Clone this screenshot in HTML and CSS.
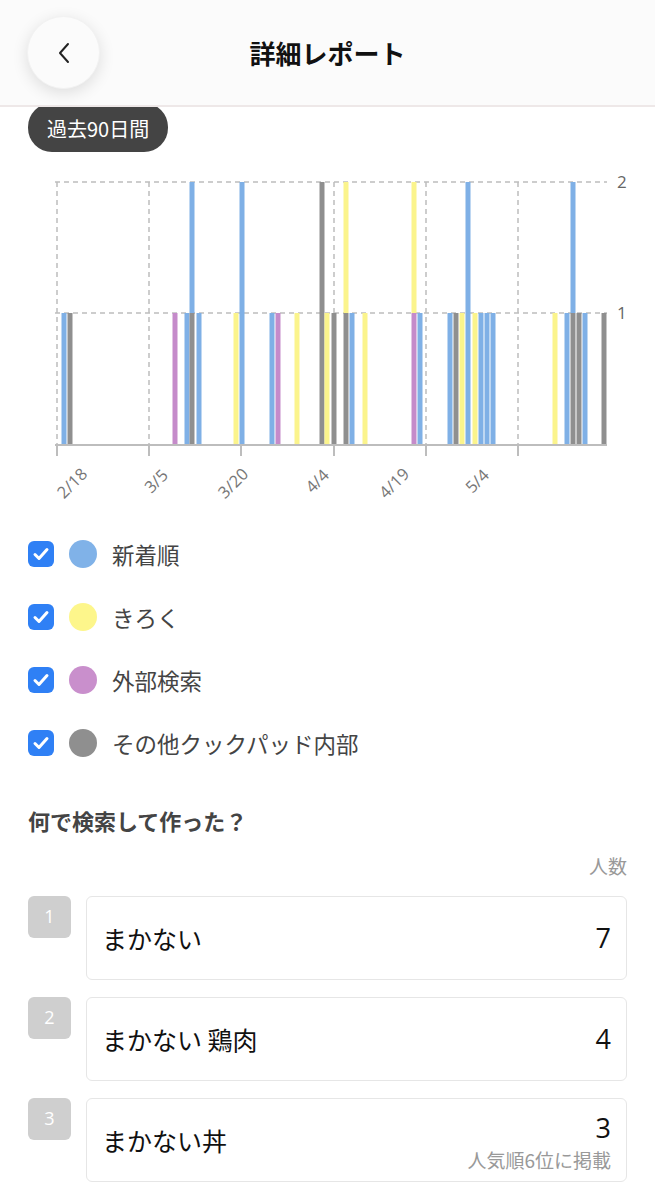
FILE: index.html
```html
<!DOCTYPE html>
<html lang="ja">
<head>
  <meta charset="UTF-8">
  <meta name="viewport" content="width=device-width, initial-scale=1.0">
  <title>詳細レポート</title>
  <link rel="stylesheet" href="styles.css">
</head>
<body>
  <header class="topbar">
    <button class="back" aria-label="戻る">
      <svg width="14" height="22" viewBox="0 0 14 22"><path d="M11 2 L3 11 L11 20" fill="none" stroke="#222" stroke-width="2" stroke-linecap="round" stroke-linejoin="round"/></svg>
    </button>
    <h1>詳細レポート</h1>
    <span></span>
  </header>

  <main class="content">
    <div class="period">過去90日間</div>

    <svg class="chart" width="655" height="350" viewBox="0 160 655 350">
      <g class="grid">
        <line x1="55" y1="182" x2="607" y2="182"/>
        <line x1="55" y1="313" x2="607" y2="313"/>
        <line x1="57" y1="182" x2="57" y2="445"/>
        <line x1="149" y1="182" x2="149" y2="445"/>
        <line x1="241" y1="182" x2="241" y2="445"/>
        <line x1="334" y1="182" x2="334" y2="445"/>
        <line x1="426" y1="182" x2="426" y2="445"/>
        <line x1="518" y1="182" x2="518" y2="445"/>
      </g>
      <g id="bars"></g>
      <g class="axis">
        <line x1="55" y1="445" x2="607" y2="445"/>
        <line x1="57" y1="445" x2="57" y2="456"/>
        <line x1="149" y1="445" x2="149" y2="456"/>
        <line x1="241" y1="445" x2="241" y2="456"/>
        <line x1="334" y1="445" x2="334" y2="456"/>
        <line x1="426" y1="445" x2="426" y2="456"/>
        <line x1="518" y1="445" x2="518" y2="456"/>
      </g>
      <g class="ylabels">
        <text x="617" y="188">2</text>
        <text x="617" y="319">1</text>
      </g>
      <g class="xlabels">
        <text x="72" y="489" transform="rotate(-45 72 483)">2/18</text>
        <text x="156" y="487" transform="rotate(-45 156 481)">3/5</text>
        <text x="233" y="489" transform="rotate(-45 233 483)">3/20</text>
        <text x="317" y="487" transform="rotate(-45 317 481)">4/4</text>
        <text x="394" y="489" transform="rotate(-45 394 483)">4/19</text>
        <text x="477" y="487" transform="rotate(-45 477 481)">5/4</text>
      </g>
    </svg>

    <ul class="legend">
      <li><span class="check"></span><span class="dot blue"></span>新着順</li>
      <li><span class="check"></span><span class="dot yellow"></span>きろく</li>
      <li><span class="check"></span><span class="dot purple"></span>外部検索</li>
      <li><span class="check"></span><span class="dot gray"></span>その他クックパッド内部</li>
    </ul>

    <h2 class="section-title">何で検索して作った？</h2>
    <div class="count-head">人数</div>

    <ol class="ranking">
      <li>
        <span class="rank">1</span>
        <div class="card">
          <span class="word">まかない</span>
          <span class="num">7</span>
        </div>
      </li>
      <li>
        <span class="rank">2</span>
        <div class="card">
          <span class="word">まかない 鶏肉</span>
          <span class="num">4</span>
        </div>
      </li>
      <li>
        <span class="rank">3</span>
        <div class="card">
          <span class="word">まかない丼</span>
          <div class="right">
            <span class="num">3</span>
            <span class="note">人気順6位に掲載</span>
          </div>
        </div>
      </li>
    </ol>
  </main>

  <script>
    // bars: [x, [color, from, to], ...]
    var colors = { b: '#7fb0e6', y: '#fbf48c', p: '#c58bca', g: '#8f8f8f' };
    var levels = [445, 313, 182];
    var data = [
      [64, ['b', 0, 1]], [70, ['g', 0, 1]],
      [175, ['p', 0, 1]], [187, ['b', 0, 1]], [192, ['g', 0, 1], ['b', 1, 2]], [199, ['b', 0, 1]],
      [236, ['y', 0, 1]], [242, ['b', 0, 2]],
      [272, ['b', 0, 1]], [278, ['p', 0, 1]], [297, ['y', 0, 1]],
      [322, ['g', 0, 2]], [327, ['y', 0, 1]], [334, ['g', 0, 1]],
      [346, ['g', 0, 1], ['y', 1, 2]], [352, ['b', 0, 1]], [365, ['y', 0, 1]],
      [414, ['p', 0, 1], ['y', 1, 2]], [420, ['b', 0, 1]],
      [450, ['b', 0, 1]], [456, ['g', 0, 1]], [462, ['y', 0, 1]], [468, ['b', 0, 2]],
      [475, ['y', 0, 1]], [481, ['b', 0, 1]], [487, ['b', 0, 1]], [493, ['b', 0, 1]],
      [555, ['y', 0, 1]], [567, ['b', 0, 1]], [573, ['g', 0, 1], ['b', 1, 2]],
      [579, ['g', 0, 1]], [585, ['b', 0, 1]], [604, ['g', 0, 1]]
    ];
    var svgns = 'http://www.w3.org/2000/svg';
    var g = document.getElementById('bars');
    data.forEach(function (bar) {
      for (var i = 1; i < bar.length; i++) {
        var seg = bar[i];
        var r = document.createElementNS(svgns, 'rect');
        var top = levels[seg[2]];
        var bottom = levels[seg[1]];
        r.setAttribute('x', bar[0] - 2.5);
        r.setAttribute('y', top);
        r.setAttribute('width', 5);
        r.setAttribute('height', bottom - top);
        r.setAttribute('fill', colors[seg[0]]);
        g.appendChild(r);
      }
    });
  </script>
</body>
</html>
```

FILE: styles.css
```css
/* page */
body {
  margin: 0;
  background: #fff;
  font-family: "Noto Sans CJK JP", "Noto Sans", sans-serif;
  color: #444;
}

.topbar {
  position: sticky;
  top: 0;
  z-index: 2;
  height: 105px;
  background: #fbfbfb;
  border-bottom: 2px solid #eee8e8;
  display: grid;
  grid-template-columns: 1fr auto 1fr;
  align-items: center;
}

.back {
  margin-left: 27px;
  width: 73px;
  height: 73px;
  border-radius: 50%;
  border: 1px solid #f2f2f2;
  background: #fbfbfb;
  box-shadow: 0 4px 16px rgba(0, 0, 0, 0.12);
  display: flex;
  align-items: center;
  justify-content: center;
  padding: 0;
}

.topbar h1 {
  margin: 0;
  font-size: 26px;
  font-weight: 700;
  color: #111;
}

.content {
  padding: 0 28px;
}

.period {
  display: inline-block;
  margin-top: -4px;
  height: 49px;
  line-height: 51px;
  padding: 0 19px;
  border-radius: 24px;
  background: #444;
  color: #fff;
  font-size: 20px;
}

.chart {
  display: block;
  margin: 8px 0 0 -28px;
}

.grid line {
  stroke: #bdbdbd;
  stroke-width: 1.5;
  stroke-dasharray: 5 4;
}

.axis line {
  stroke: #bdbdbd;
  stroke-width: 2;
}

.ylabels text {
  font-family: "Open Sans", sans-serif;
  font-size: 17px;
  fill: #666;
}

.xlabels text {
  font-family: "Open Sans", sans-serif;
  font-size: 16.5px;
  fill: #777;
  text-anchor: middle;
}

.legend {
  list-style: none;
  margin: 12px 0 0;
  padding: 0;
}

.legend li {
  height: 63px;
  display: flex;
  align-items: center;
  font-size: 22.5px;
  color: #444;
}

.check {
  width: 26px;
  height: 26px;
  border-radius: 6px;
  background: #2f80f5 url("data:image/svg+xml,%3Csvg xmlns='http://www.w3.org/2000/svg' viewBox='0 0 26 26'%3E%3Cpath d='M7 13.5l4 4 8-9' fill='none' stroke='%23fff' stroke-width='3' stroke-linecap='round' stroke-linejoin='round'/%3E%3C/svg%3E") center / 26px 26px no-repeat;
  margin-right: 15px;
}

.dot {
  width: 28px;
  height: 28px;
  border-radius: 50%;
  margin-right: 15px;
}

.dot.blue { background: #80b2e8; }
.dot.yellow { background: #fdf68b; }
.dot.purple { background: #c98fcc; }
.dot.gray { background: #8f8f8f; }

.section-title {
  margin: 31px 0 0;
  font-size: 22px;
  line-height: 30px;
  font-weight: 700;
  color: #444;
}

.count-head {
  margin-top: 18px;
  text-align: right;
  font-size: 19px;
  line-height: 26px;
  color: #999;
}

.ranking {
  list-style: none;
  margin: 17px 0 0;
  padding: 0;
}

.ranking li {
  display: flex;
  align-items: flex-start;
  gap: 15px;
  margin-bottom: 17px;
}

.rank {
  flex: none;
  width: 43px;
  height: 42px;
  border-radius: 6px;
  background: #cfcfcf;
  color: #fff;
  font-family: "Open Sans", sans-serif;
  font-size: 18px;
  text-align: center;
  line-height: 40px;
}

.card {
  flex: 1;
  height: 82px;
  border: 1px solid #e6e6e6;
  border-radius: 6px;
  display: flex;
  align-items: center;
  justify-content: space-between;
  padding: 0 15px 0 15px;
}

.word {
  font-size: 25px;
  color: #111;
}

.num {
  font-family: "Open Sans", sans-serif;
  font-size: 27px;
  line-height: 32px;
  color: #111;
}

.right {
  display: flex;
  flex-direction: column;
  align-items: flex-end;
  margin-top: 4px;
}

.note {
  font-size: 19px;
  line-height: 24px;
  color: #999;
  margin-top: 4px;
}
```
